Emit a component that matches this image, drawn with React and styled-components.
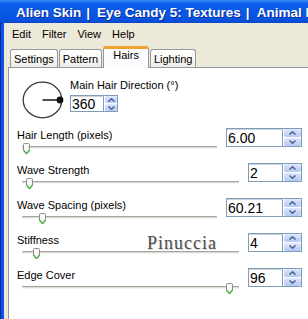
import React from "react";
import styled, { createGlobalStyle } from "styled-components";

const UI = `"Liberation Sans", Arial, sans-serif`;

const Global = createGlobalStyle`
  html, body { margin: 0; padding: 0; overflow: hidden; background: #ece9d8; }
  #root { width: 308px; height: 319px; }
`;

const Window = styled.div`
  width: 308px;
  height: 319px;
  overflow: hidden;
  display: flex;
  flex-direction: column;
  background: #ece9d8;
  font-family: ${UI};
  font-size: 11px;
  color: #000;
`;

const TitleBar = styled.div`
  height: 23px;
  flex: none;
  box-sizing: border-box;
  padding: 2px 0 0 11px;
  display: flex;
  align-items: center;
  gap: 5px;
  overflow: hidden;
  background: linear-gradient(180deg, #3f8cf6 0%, #0d5fe9 14%, #0858e6 50%, #0753e2 85%, #0a47c9 100%);
  color: #fff;
  font: bold 13.5px "Liberation Sans", Arial, sans-serif;
  white-space: nowrap;
  text-shadow: 1px 1px 0 #0b2a8f;
`;

const Sep = styled.span`
  margin: 0 7px 0 5px;
`;

const Body = styled.div`
  flex: 1;
  display: flex;
  min-height: 0;
`;

const FrameEdge = styled.div`
  width: 4px;
  flex: none;
  background: linear-gradient(90deg, #0024a8 0 1px, #0a54e6 1px 100%);
`;

const Client = styled.div`
  flex: 1;
  display: flex;
  flex-direction: column;
  min-width: 0;
`;

const MenuBar = styled.div`
  height: 21px;
  flex: none;
  display: flex;
  padding-left: 2.5px;
  line-height: 22px;
`;

const MenuItem = styled.span`
  padding: 0 5.5px;
`;

const TabStrip = styled.div`
  height: 23px;
  flex: none;
  display: flex;
  align-items: flex-end;
  gap: 1px;
  padding-left: 6px;
  position: relative;
  z-index: 1;
`;

const Tab = styled.div`
  box-sizing: border-box;
  height: ${(p) => (p.$active ? 22 : 18)}px;
  margin-bottom: ${(p) => (p.$active ? -1 : 0)}px;
  padding: ${(p) => (p.$active ? "0 9px" : "1px 3px 0")};
  border: 1px solid #919b9c;
  border-bottom: none;
  border-top: ${(p) => (p.$active ? "3px solid #f0a030" : "1px solid #919b9c")};
  border-radius: 3px 3px 0 0;
  line-height: ${(p) => (p.$active ? 12 : 16)}px;
  background: ${(p) => (p.$active ? "#fcfcfe" : "linear-gradient(180deg, #ffffff 0%, #f6f5f1 60%, #ecebe4 100%)")};
`;

const Panel = styled.div`
  flex: 1;
  margin-left: 4px;
  background: #ffffff;
  border-top: 1px solid #919b9c;
  border-left: 1px solid #919b9c;
  padding-top: 9px;
  position: relative;
`;

const DialRow = styled.div`
  height: 50px;
  display: flex;
  align-items: flex-start;
  gap: 6px;
  padding-left: 13px;
`;

const Dial = styled.svg`
  margin-top: 4px;
  flex: none;
`;

const DialSide = styled.div`
  display: flex;
  flex-direction: column;
  align-items: flex-start;
`;

const Label = styled.div`
  line-height: 16px;
  white-space: nowrap;
`;

const Row = styled.div`
  height: 35px;
  display: flex;
  align-items: flex-start;
  gap: 9px;
  padding: 0 6px 0 8px;
`;

const SliderCol = styled.div`
  flex: 1;
  min-width: 0;
`;

const Slider = styled.div`
  position: relative;
  height: 14px;
  margin-left: 5px;
  margin-top: -1px;
`;

const Track = styled.div`
  position: absolute;
  left: 0;
  right: 0;
  top: 4px;
  height: 3px;
  box-sizing: border-box;
  border-top: 1px solid #a4a39c;
  border-bottom: 1px solid #f4f4f2;
  background: #dcdbd4;
  border-radius: 1px;
`;

const Thumb = styled.svg`
  position: absolute;
  top: 1px;
`;

const Spin = styled.div`
  flex: none;
  display: flex;
  height: ${(p) => p.$h}px;
  box-sizing: border-box;
  margin-top: ${(p) => p.$mt}px;
  border: 1px solid #7f9db9;
  background: #fff;
`;

const Field = styled.div`
  width: ${(p) => p.$w}px;
  box-sizing: border-box;
  border-right: 1px solid #7f9db9;
  border-top: 1px solid #c9d3de;
  padding-left: 1px;
  font-size: 14px;
  line-height: ${(p) => p.$lh}px;
`;

const Buttons = styled.div`
  width: ${(p) => p.$w}px;
  display: flex;
  flex-direction: column;
  gap: 1px;
  padding: 0 0 0 1px;
  box-sizing: border-box;
  background: #fff;
`;

const SpinBtn = styled.div`
  flex: 1;
  display: flex;
  align-items: center;
  justify-content: center;
  border-radius: 2px;
  background: linear-gradient(180deg, #dfe8fd 0%, #c6d6fa 55%, #b4c7f4 100%);
`;

const Watermark = styled.div`
  position: absolute;
  left: 138px;
  top: 165px;
  font: 18px/20px "Liberation Serif", "Times New Roman", serif;
  letter-spacing: 1px;
  color: #4e4e4e;
  text-shadow: 1px 1px 0 #d8d8d8;
  pointer-events: none;
`;

function Arrow({ up }) {
  return (
    <svg width="7" height="4" viewBox="0 0 7 4">
      <path
        d={up ? "M0.5 3.5 L3.5 0.8 L6.5 3.5" : "M0.5 0.5 L3.5 3.2 L6.5 0.5"}
        fill="none"
        stroke="#4d6185"
        strokeWidth="1.5"
      />
    </svg>
  );
}

function SpinBox({ value, fieldW, btnW = 18, h = 19, mt = 1 }) {
  return (
    <Spin $h={h} $mt={mt}>
      <Field $w={fieldW} $lh={h - 3}>{value}</Field>
      <Buttons $w={btnW}>
        <SpinBtn><Arrow up /></SpinBtn>
        <SpinBtn><Arrow /></SpinBtn>
      </Buttons>
    </Spin>
  );
}

function SliderRow({ label, value, fieldW, frac }) {
  return (
    <Row>
      <SliderCol>
        <Label>{label}</Label>
        <Slider>
          <Track />
          <Thumb
            width="7"
            height="12"
            viewBox="0 0 7 12"
            style={{ left: `calc(${frac} * (100% - 7px))` }}
          >
            <path d="M0.5 1.5 Q0.5 0.5 1.5 0.5 H5.5 Q6.5 0.5 6.5 1.5 V7.5 L3.5 11 L0.5 7.5 Z" fill="#f7f7f4" stroke="#8d8d8a" strokeWidth="1" />
            <path d="M0.5 7 L3.5 10.6 L6.5 7" fill="none" stroke="#3fb13f" strokeWidth="1.2" />
          </Thumb>
        </Slider>
      </SliderCol>
      <SpinBox value={value} fieldW={fieldW} />
    </Row>
  );
}

const rows = [
  { label: "Hair Length (pixels)", value: "6.00", fieldW: 56, frac: 0.003 },
  { label: "Wave Strength", value: "2", fieldW: 34, frac: 0.021 },
  { label: "Wave Spacing (pixels)", value: "60.21", fieldW: 56, frac: 0.093 },
  { label: "Stiffness", value: "4", fieldW: 34, frac: 0.05 },
  { label: "Edge Cover", value: "96", fieldW: 34, frac: 0.97 },
];

export default function App() {
  return (
    <>
      <Global />
      <Window>
        <TitleBar>
          <svg width="12" height="14" viewBox="0 0 12 14">
            <path d="M6 0.5 C9.5 0.5 11.5 3 11.5 6.5 C11.5 10 8.5 13.5 5.5 13.5 C2.5 13.5 0.5 11 0.5 7.5 C0.5 3.5 2.5 0.5 6 0.5 Z" fill="#0a0a0a" />
            <path d="M2.6 5.2 C3.2 3.2 5.2 2.6 6.6 3.4 C5.6 4.6 4.4 6.4 3 6.8 C2.6 6.4 2.5 5.8 2.6 5.2 Z" fill="#f2f2f2" />
          </svg>
          <span>
            Alien Skin<Sep>|</Sep>Eye Candy 5: Textures<Sep>|</Sep>Animal Fur
          </span>
        </TitleBar>
        <Body>
          <FrameEdge />
          <Client>
            <MenuBar>
              <MenuItem>Edit</MenuItem>
              <MenuItem>Filter</MenuItem>
              <MenuItem>View</MenuItem>
              <MenuItem>Help</MenuItem>
            </MenuBar>
            <TabStrip>
              <Tab>Settings</Tab>
              <Tab>Pattern</Tab>
              <Tab $active>Hairs</Tab>
              <Tab>Lighting</Tab>
            </TabStrip>
            <Panel>
              <DialRow>
                <Dial width="42" height="38" viewBox="0 0 42 38">
                  <ellipse cx="20.5" cy="19" rx="19.3" ry="17.8" fill="none" stroke="#3a3a3a" strokeWidth="1.3" />
                  <line x1="20.5" y1="19" x2="38" y2="19" stroke="#3a3a3a" strokeWidth="1.8" />
                  <circle cx="38" cy="19" r="3.4" fill="#111" />
                </Dial>
                <DialSide>
                  <Label>Main Hair Direction (°)</Label>
                  <SpinBox value="360" fieldW={33} btnW={13} h={17} mt={2} />
                </DialSide>
              </DialRow>
              {rows.map((r) => (
                <SliderRow key={r.label} {...r} />
              ))}
              <Watermark>Pinuccia</Watermark>
            </Panel>
          </Client>
        </Body>
      </Window>
    </>
  );
}
